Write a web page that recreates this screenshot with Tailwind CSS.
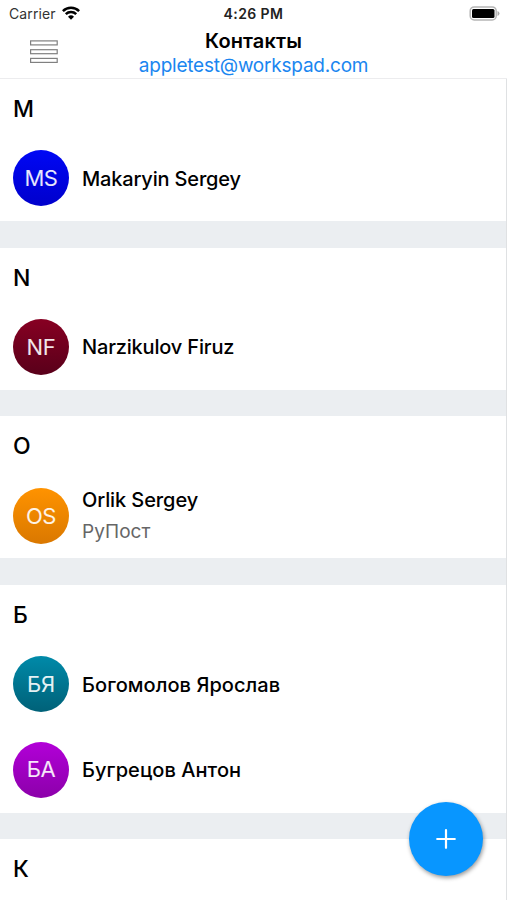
<!DOCTYPE html>
<html lang="ru">
<head>
<meta charset="utf-8">
<title>Контакты</title>
<script src="https://cdn.jsdelivr.net/npm/@tailwindcss/browser@4"></script>
</head>
<body class="h-[900px] overflow-hidden bg-white font-['Inter','Liberation_Sans',sans-serif] text-black">
<div class="relative flex h-[900px] flex-col overflow-hidden">
  <header class="h-[80px] shrink-0 border-b-2 border-[#ececee] bg-white">
    <div class="grid h-[27px] grid-cols-3 items-center pr-[7px] pl-[9px] text-[14px] leading-[27px]">
      <div class="flex items-center gap-[7px] text-[#333]">
        <span class="tracking-[0.1px]">Carrier</span>
        <svg class="-mt-[2px] -ml-px h-[14px] w-[18px]" viewBox="0 0 18 14" fill="none" stroke="#000" stroke-width="2.5"><path d="M.9 5.1a11.5 11.5 0 0 1 16.2 0"/><path d="M3.8 8.1a7.4 7.4 0 0 1 10.4 0"/><path d="M9 13.7 6 10.7a4.3 4.3 0 0 1 6 0z" fill="#000" stroke="none"/></svg>
      </div>
      <div class="pr-[2px] text-center font-semibold tracking-[0.4px] whitespace-nowrap text-[#222]">4:26 PM</div>
      <svg class="h-[15px] w-[31px] justify-self-end" viewBox="0 0 31 15"><rect x="1.200" y=".9" width="26" height="13" rx="4" fill="#fff" stroke="#b5b5b5" stroke-width="1.500"/><rect x="3" y="3" width="22.500" height="9" rx="1.500"/><path d="M28.500 5q2 .6 2 2.500t-2 2.500z" fill="#aaa"/></svg>
    </div>
    <div class="grid h-[51px] grid-cols-[139px_229px_139px]">
      <svg class="mt-[13px] ml-[30px] h-[24px] w-[28px]" viewBox="0 0 28 24" fill="#fff" stroke="#808080" stroke-width="1.200"><rect x=".6" y=".9" width="26.600" height="4"/><rect x=".6" y="9.700" width="26.600" height="4"/><rect x=".6" y="18.400" width="26.600" height="4"/></svg>
      <div class="flex flex-col items-center whitespace-nowrap">
        <h1 class="h-[26px] text-[20px] leading-[28px] font-semibold tracking-[0.1px]">Контакты</h1>
        <div class="text-[19px] leading-[26px] tracking-[-0.220px] text-[#1a86f0]">appletest@workspad.com</div>
      </div>
    </div>
  </header>
  <main class="-mt-px flex flex-col gap-[26.400px] border-r border-[#dfe1e3] bg-[#ebeef1]">
    <section class="h-[142.200px] shrink-0 bg-white">
      <h2 class="h-[56.600px] pl-[13px] text-[23px] leading-[60px] font-medium">M</h2>
      <div class="flex h-[85.600px] items-center gap-[13px] pl-[13px]">
        <div class="flex size-[56px] items-center justify-center rounded-full bg-linear-to-b from-[#0008f5] to-[#0000cc] pt-px text-[22px] tracking-[-0.400px] text-white/90">MS</div>
        <div class="pt-[2px] text-[20px] font-medium tracking-[-0.170px]">Makaryin Sergey</div>
      </div>
    </section>
    <section class="h-[142.200px] shrink-0 bg-white">
      <h2 class="h-[56.600px] pl-[13px] text-[23px] leading-[60px] font-medium">N</h2>
      <div class="flex h-[85.600px] items-center gap-[13px] pl-[13px]">
        <div class="flex size-[56px] items-center justify-center rounded-full bg-linear-to-b from-[#870022] to-[#59001a] pt-px text-[22px] tracking-[-0.400px] text-white/90">NF</div>
        <div class="pt-px text-[20px] font-medium tracking-[-0.170px]">Narzikulov Firuz</div>
      </div>
    </section>
    <section class="h-[142.200px] shrink-0 bg-white">
      <h2 class="h-[56.600px] pl-[13px] text-[23px] leading-[60px] font-medium">O</h2>
      <div class="flex h-[85.600px] items-center gap-[13px] pl-[13px]">
        <div class="flex size-[56px] items-center justify-center rounded-full bg-linear-to-b from-[#ff9300] to-[#da7800] pt-px text-[22px] tracking-[-0.400px] text-white/90">OS</div>
        <div class="flex flex-col pt-px">
          <div class="text-[20px] leading-[31px] font-medium tracking-[-0.100px]">Orlik Sergey</div>
          <div class="text-[19px] leading-[31px] tracking-[0.050px] text-[#666]">РуПост</div>
        </div>
      </div>
    </section>
    <section class="h-[227.800px] shrink-0 bg-white">
      <h2 class="h-[56.600px] pl-[13px] text-[23px] leading-[60px] font-medium">Б</h2>
      <div class="flex h-[85.600px] items-center gap-[13px] pl-[13px]">
        <div class="flex size-[56px] items-center justify-center rounded-full bg-linear-to-b from-[#008aa9] to-[#006178] text-[22px] tracking-[-0.200px] text-white/90">БЯ</div>
        <div class="pt-px text-[20px] font-medium tracking-[0.060px]">Богомолов Ярослав</div>
      </div>
      <div class="flex h-[85.600px] items-center gap-[13px] pl-[13px]">
        <div class="flex size-[56px] items-center justify-center rounded-full bg-linear-to-b from-[#b200d8] to-[#8c00aa] text-[22px] tracking-[-0.400px] text-white/90">БА</div>
        <div class="text-[20px] font-medium tracking-[0.060px]">Бугрецов Антон</div>
      </div>
    </section>
    <section class="h-[142.200px] shrink-0 bg-white">
      <h2 class="h-[56.600px] pl-[13px] text-[23px] leading-[60px] font-medium">К</h2>
    </section>
  </main>
  <button aria-label="Добавить" class="absolute top-[802px] left-[409px] flex size-[74px] items-center justify-center rounded-full bg-[#0896ff] shadow-[1px_2px_4px_rgba(0,0,0,0.4)]">
    <svg class="size-[20px]" viewBox="0 0 20 20" stroke="#fff" stroke-width="2.200" stroke-linecap="round"><path d="M10 1.200v17.600M1.200 10h17.600"/></svg>
  </button>
</div>
</body>
</html>
